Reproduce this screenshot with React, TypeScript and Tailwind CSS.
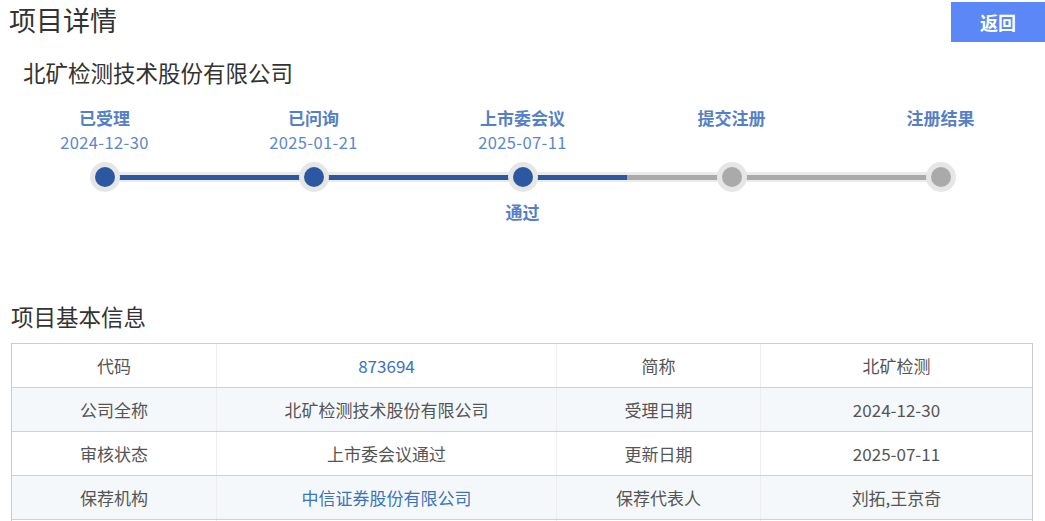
import React from "react";

const steps = [
  { name: "已受理", date: "2024-12-30", done: true },
  { name: "已问询", date: "2025-01-21", done: true },
  { name: "上市委会议", date: "2025-07-11", done: true, note: "通过" },
  { name: "提交注册", date: "", done: false },
  { name: "注册结果", date: "", done: false },
];

const rows = [
  ["代码", "873694", "简称", "北矿检测", true],
  ["公司全称", "北矿检测技术股份有限公司", "受理日期", "2024-12-30", false],
  ["审核状态", "上市委会议通过", "更新日期", "2025-07-11", false],
  ["保荐机构", "中信证券股份有限公司", "保荐代表人", "刘拓,王京奇", true],
  ["", "", "", "", false],
] as const;

function Step({ step, index }: { step: (typeof steps)[number]; index: number }) {
  const leftBlue = index > 0 && steps[index - 1].done && step.done;
  const rightBlue = step.done && index < steps.length - 1;
  return (
    <div className="flex flex-col items-center">
      <div className="h-[24px] text-[17px] leading-[24px] font-bold text-[#5580c6]">{step.name}</div>
      <div className="h-[24px] text-[16.5px] leading-[24px] tracking-[0.4px] text-[#5a88cc]">{step.date}</div>
      <div className="mt-[8px] flex h-[30px] w-full items-center">
        <div className="flex h-[10px] flex-1 items-center">
          {index > 0 && (
            <div className="flex h-[10px] w-full items-center bg-[#ebebeb]">
              <div className={leftBlue ? "h-[5px] w-full bg-[#2b58a0]" : "h-[5px] w-full bg-[#aaaaaa]"} />
            </div>
          )}
        </div>
        <div className="z-10 -mx-[15px] flex h-[30px] w-[30px] items-center justify-center rounded-full bg-[#e6e6e6]">
          <div className={step.done ? "h-[20px] w-[20px] rounded-full bg-[#2b58a0]" : "h-[20px] w-[20px] rounded-full bg-[#aaaaaa]"} />
        </div>
        <div className="flex h-[10px] flex-1 items-center">
          {index < steps.length - 1 && (
            <div className="flex h-[10px] w-full items-center bg-[#ebebeb]">
              <div className={rightBlue ? "h-[5px] w-full bg-[#2b58a0]" : "h-[5px] w-full bg-[#aaaaaa]"} />
            </div>
          )}
        </div>
      </div>
      <div className="mt-[8px] h-[24px] text-[17px] leading-[24px] font-bold text-[#5580c6]">{step.note ?? ""}</div>
    </div>
  );
}

export default function App() {
  return (
    <div
      className="w-[1045px] h-[521px] overflow-hidden bg-white text-[#333]"
      style={{ fontFamily: '"Noto Sans CJK SC", "Noto Sans", sans-serif' }}
    >
      <div className="flex h-[42px] items-start justify-between">
        <h1 className="pl-[9px] text-[27px] leading-[40px] text-[#333]">项目详情</h1>
        <button className="mt-[2px] h-[40px] w-[94px] bg-[#5b87f7] text-[18px] font-bold text-white">返回</button>
      </div>

      <div className="mt-[15px] h-[30px] pl-[23px] text-[22.5px] leading-[30px] text-[#333]">北矿检测技术股份有限公司</div>

      <div className="mt-[19px] grid grid-cols-5">
        {steps.map((s, i) => (
          <Step key={s.name} step={s} index={i} />
        ))}
      </div>

      <div className="mt-[77px] h-[30px] pl-[11px] text-[22.5px] leading-[30px] text-[#333]">项目基本信息</div>

      <div className="mt-[12px] ml-[11px] w-[1022px] border border-[#cccccc] text-[17px] text-[#555]">
        {rows.map((r, i) => (
          <div
            key={i}
            className={
              i % 2 === 1
                ? "grid h-[44px] grid-cols-[205px_340px_204px_1fr] border-b border-[#d0d0d0] bg-[#f4f8fb]"
                : "grid h-[44px] grid-cols-[205px_340px_204px_1fr] border-b border-[#d0d0d0] bg-white"
            }
          >
            <div className="flex items-center justify-center border-r border-[#eeeeee]">{r[0]}</div>
            <div className={r[4] ? "flex items-center justify-center border-r border-[#eeeeee] text-[#3b73bd]" : "flex items-center justify-center border-r border-[#eeeeee]"}>
              {r[1]}
            </div>
            <div className="flex items-center justify-center border-r border-[#eeeeee]">{r[2]}</div>
            <div className="flex items-center justify-center">{r[3]}</div>
          </div>
        ))}
      </div>
    </div>
  );
}
